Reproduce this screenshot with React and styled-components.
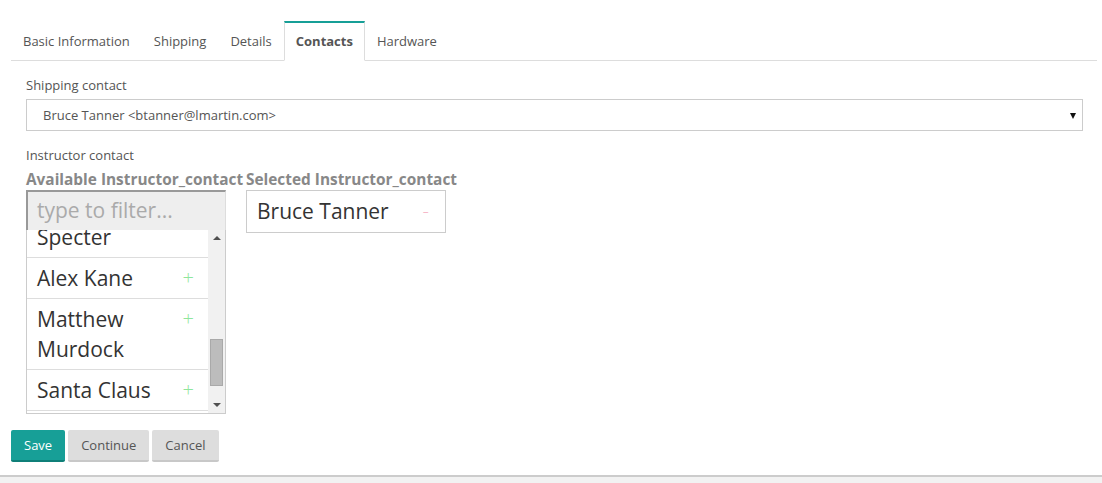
import React, { useLayoutEffect, useRef } from "react";
import styled, { createGlobalStyle } from "styled-components";

const GlobalStyle = createGlobalStyle`
  html, body {
    margin: 0;
    padding: 0;
    background: #fff;
    font-family: "Open Sans", "Liberation Sans", sans-serif;
  }
  * { box-sizing: border-box; }
`;

const teal = "#179f97";

const tabs = ["Basic Information", "Shipping", "Details", "Contacts", "Hardware"];
const available = ["Tony Stark", "Harvey Specter", "Alex Kane", "Matthew Murdock", "Santa Claus", "Bruce Wayne"];

const Page = styled.div`
  padding: 21px 5px 0 11px;
`;

const TabBar = styled.div`
  display: flex;
  border-bottom: 1px solid #ddd;
  height: 40px;
`;

const Tab = styled.div`
  height: 40px;
  line-height: 37px;
  padding: 0 11px;
  font-size: 13px;
  color: #555;
  border: 1px solid transparent;
  border-top: 2px solid transparent;
  margin-bottom: -1px;
  font-weight: ${(p) => (p.$active ? 700 : 400)};
  background: ${(p) => (p.$active ? "#fff" : "transparent")};
  background-clip: padding-box;
  ${(p) =>
    p.$active &&
    `
    border-color: #ddd;
    border-top-color: ${teal};
    border-bottom-color: #fff;
  `}
`;

const Panel = styled.div`
  padding: 15px 14px 0 15px;
`;

const Label = styled.div`
  font-size: 13px;
  line-height: 18px;
  color: #555;
  margin-bottom: 5px;
`;

const Select = styled.div`
  position: relative;
  height: 32px;
  border: 1px solid #ccc;
  padding-left: 16px;
  font-size: 13px;
  line-height: 30px;
  color: #555;
  margin-bottom: 15px;
`;

const Caret = styled.span`
  position: absolute;
  right: 6px;
  top: 13px;
  width: 0;
  height: 0;
  border-left: 3.5px solid transparent;
  border-right: 3.5px solid transparent;
  border-top: 6px solid #111;
`;

const Dual = styled.div`
  display: flex;
  gap: 20px;
  margin-top: 6px;
`;

const Column = styled.div`
  width: 200px;
`;

const Heading = styled.div`
  font-size: 15.4px;
  line-height: 20px;
  font-weight: 700;
  color: #888;
  white-space: nowrap;
`;

const Filter = styled.div`
  height: 40px;
  background: #eee;
  border-top: 2px solid #999;
  border-left: 2px solid #999;
  border-right: 1px solid #ddd;
  padding-left: 9px;
  font-size: 21px;
  line-height: 36px;
  color: #aaa;
`;

const ListFrame = styled.div`
  display: flex;
  height: 184px;
  border: 1px solid #ccc;
  border-top: none;
`;

const Items = styled.div`
  flex: 1;
  overflow: hidden;
`;

const Item = styled.div`
  display: flex;
  justify-content: space-between;
  align-items: flex-start;
  padding: 5px ${(p) => (p.$selected ? "16px" : "14px")} ${(p) => (p.$selected ? "6px" : "5px")} 10px;
  font-size: 21px;
  line-height: 30px;
  color: #333;
  border-bottom: ${(p) => (p.$selected ? "none" : "1px solid #ddd")};
`;

const Sign = styled.span`
  margin-left: 10px;
  font-size: 20px;
  font-weight: 300;
  color: ${(p) => p.$color};
`;

const ScrollBar = styled.div`
  width: 17px;
  background: #f1f1f1;
  display: flex;
  flex-direction: column;
`;

const Arrow = styled.div`
  height: 17px;
  display: flex;
  align-items: center;
  justify-content: center;
  &::after {
    content: "";
    border-left: 4px solid transparent;
    border-right: 4px solid transparent;
    ${(p) => (p.$down ? "border-top: 4px solid #505050;" : "border-bottom: 4px solid #505050;")}
  }
`;

const Track = styled.div`
  flex: 1;
  padding: 92px 2px 11px 2px;
`;

const Thumb = styled.div`
  height: 47px;
  background: #bcbcbc;
  border: 1px solid #a9a9a9;
`;

const SelectedBox = styled.div`
  border: 1px solid #ccc;
`;

const Actions = styled.div`
  display: flex;
  gap: 3px;
  margin-top: 16px;
`;

const Button = styled.button`
  height: 32px;
  padding: 0 13px;
  font-family: "Open Sans", "Liberation Sans", sans-serif;
  font-size: 13px;
  border: none;
  border-radius: 2px;
  border-bottom: 2px solid ${(p) => (p.$primary ? "#0f7f78" : "#c8c8c8")};
  background: ${(p) => (p.$primary ? teal : "#ddd")};
  color: ${(p) => (p.$primary ? "#fff" : "#555")};
`;

const Footer = styled.div`
  margin-top: 13px;
  height: 8px;
  border-top: 2px solid #ccc;
  background: #f2f2f2;
`;

export default function App() {
  const listRef = useRef(null);

  useLayoutEffect(() => {
    if (listRef.current) listRef.current.scrollTop = 84;
  }, []);

  return (
    <>
      <GlobalStyle />
      <Page>
        <TabBar>
          {tabs.map((t) => (
            <Tab key={t} $active={t === "Contacts"}>
              {t}
            </Tab>
          ))}
        </TabBar>
        <Panel>
          <Label>Shipping contact</Label>
          <Select>
            Bruce Tanner &lt;btanner@lmartin.com&gt;
            <Caret />
          </Select>
          <Label>Instructor contact</Label>
          <Dual>
            <Column>
              <Heading>Available Instructor_contact</Heading>
              <Filter>type to filter...</Filter>
              <ListFrame>
                <Items ref={listRef}>
                  {available.map((name) => (
                    <Item key={name}>
                      <span>{name}</span>
                      <Sign $color="#8fe69c">+</Sign>
                    </Item>
                  ))}
                </Items>
                <ScrollBar>
                  <Arrow />
                  <Track>
                    <Thumb />
                  </Track>
                  <Arrow $down />
                </ScrollBar>
              </ListFrame>
            </Column>
            <Column>
              <Heading>Selected Instructor_contact</Heading>
              <SelectedBox>
                <Item $selected>
                  <span>Bruce Tanner</span>
                  <Sign $color="#f6b8c8">-</Sign>
                </Item>
              </SelectedBox>
            </Column>
          </Dual>
        </Panel>
        <Actions>
          <Button $primary>Save</Button>
          <Button>Continue</Button>
          <Button>Cancel</Button>
        </Actions>
      </Page>
      <Footer />
    </>
  );
}
